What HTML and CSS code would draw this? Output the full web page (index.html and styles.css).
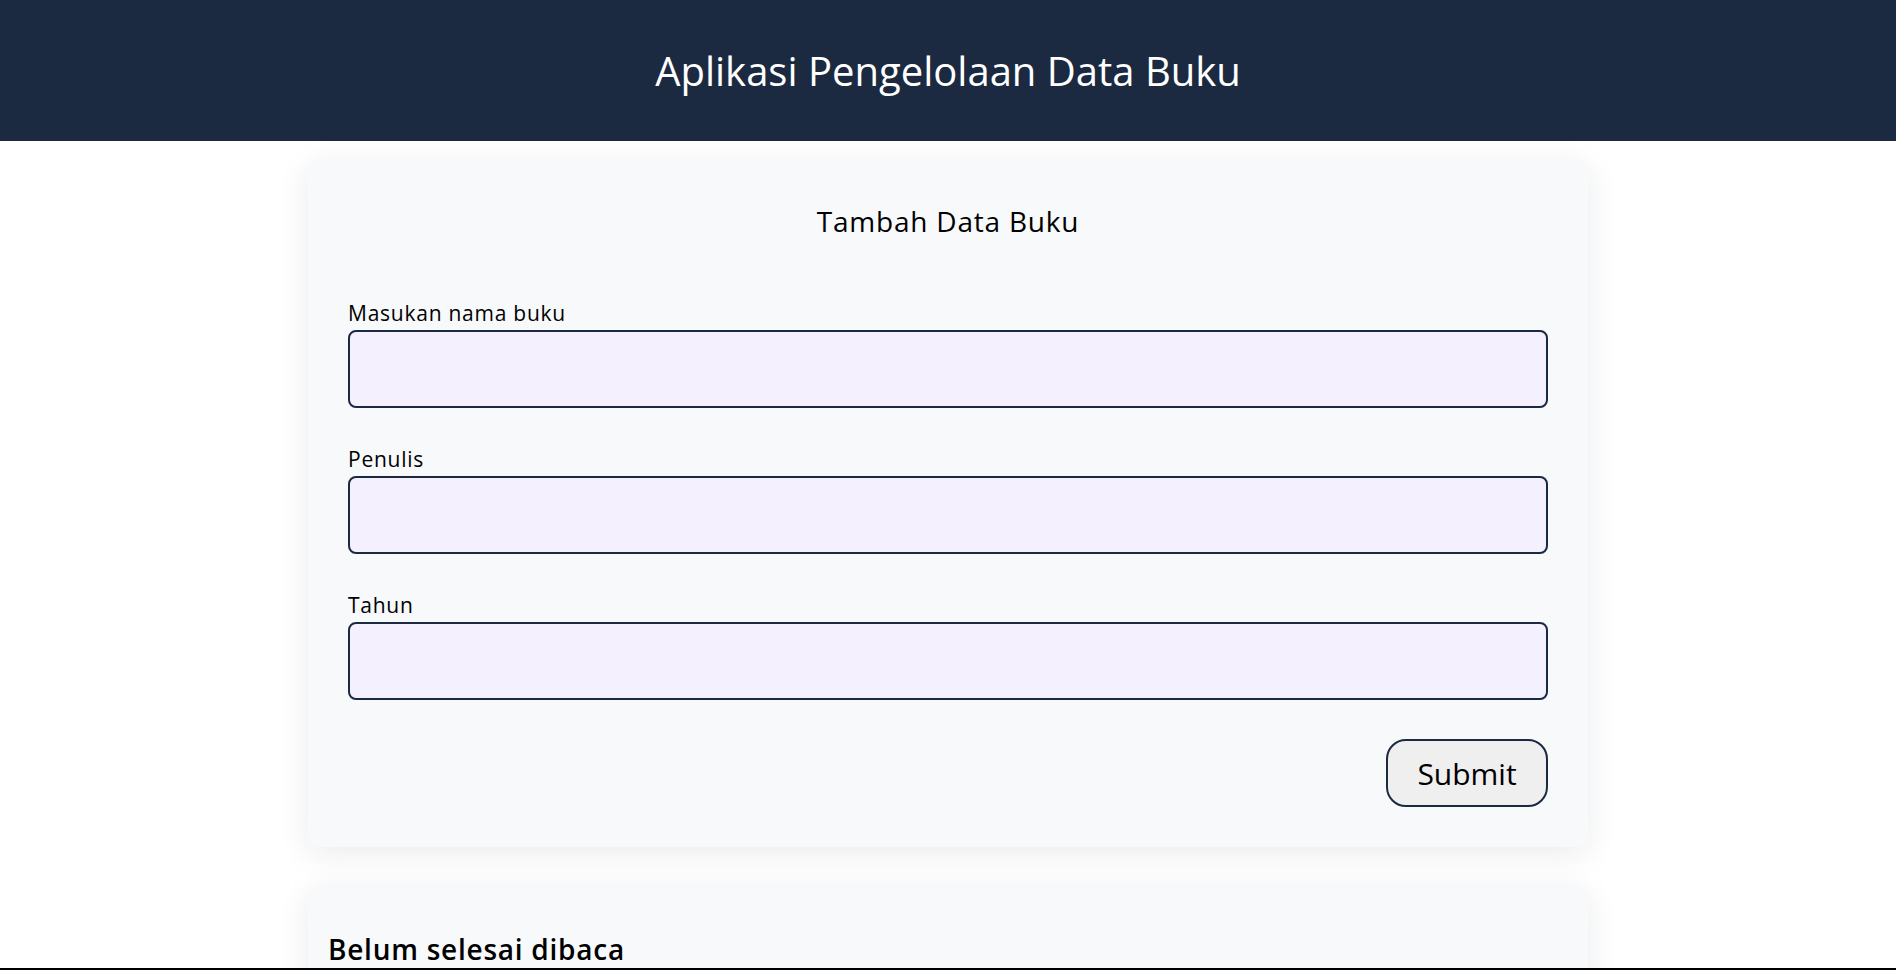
FILE: index.html
```html
<!DOCTYPE html>
<html lang="id">
<head>
<meta charset="utf-8">
<title>Aplikasi Pengelolaan Data Buku</title>
<link rel="stylesheet" href="styles.css">
</head>
<body>
<header class="app-header">
  <h1 class="app-title">Aplikasi Pengelolaan Data Buku</h1>
</header>
<main class="content">
  <section class="card form-card">
    <h2 class="form-title">Tambah Data Buku</h2>
    <form class="book-form">
      <div class="field">
        <label class="field-label" for="judul">Masukan nama buku</label>
        <input class="field-input" id="judul" type="text">
      </div>
      <div class="field">
        <label class="field-label" for="penulis">Penulis</label>
        <input class="field-input" id="penulis" type="text">
      </div>
      <div class="field">
        <label class="field-label" for="tahun">Tahun</label>
        <input class="field-input" id="tahun" type="number">
      </div>
      <div class="form-actions">
        <button class="submit-btn" type="submit">Submit</button>
      </div>
    </form>
  </section>
  <section class="card shelf-card">
    <h2 class="shelf-title">Belum selesai dibaca</h2>
    <div class="shelf-list"></div>
  </section>
</main>
<div class="bottom-rule"></div>
</body>
</html>
```
FILE: styles.css
```css
* { box-sizing: border-box; }
html, body { margin: 0; padding: 0; }
body {
  font-family: "Open Sans", Lato, sans-serif;
  color: #000;
  background: #fff;
  overflow: hidden;
}
.app-header {
  height: 141px;
  background: #1b2a41;
  display: flex;
  align-items: center;
  justify-content: center;
}
.app-title {
  margin: 0;
  color: #fff;
  font-size: 40px;
  font-weight: 500;
  line-height: 48px;
}
.content {
  width: 1280px;
  margin: 20px auto 0;
  display: flex;
  flex-direction: column;
  gap: 40px;
}
.card {
  background: #f8f9fb;
  border-radius: 10px;
  box-shadow: 0 6px 32px rgba(20, 30, 60, 0.09);
}
.form-card { padding: 40px; }
.form-title {
  margin: 0 0 59px;
  text-align: center;
  font-size: 28px;
  font-weight: 500;
  line-height: 40px;
  letter-spacing: 0.8px;
}
.book-form {
  display: flex;
  flex-direction: column;
  gap: 38px;
}
.field { display: flex; flex-direction: column; }
.field-label {
  font-size: 21px;
  line-height: 26px;
  margin-bottom: 4px;
  letter-spacing: 0.75px;
}
.field-input {
  height: 78px;
  border: 2px solid #1b2a41;
  border-radius: 8px;
  background: #f4f0fe;
  font: inherit;
  font-size: 20px;
  padding: 0 16px;
}
.form-actions {
  display: flex;
  justify-content: flex-end;
  margin-top: 1px;
}
.submit-btn {
  width: 162px;
  height: 68px;
  border: 2px solid #1b2a41;
  border-radius: 20px;
  background: #efefef;
  font-family: inherit;
  font-size: 30px;
  color: #000;
  padding: 0;
}
.shelf-card {
  padding: 42px 20px 20px;
  min-height: 200px;
}
.shelf-title {
  margin: 0;
  font-size: 28px;
  font-weight: 600;
  line-height: 40px;
  letter-spacing: 0.75px;
}
.bottom-rule {
  position: fixed;
  left: 0;
  right: 0;
  bottom: 0;
  height: 2px;
  background: #000;
}
```
